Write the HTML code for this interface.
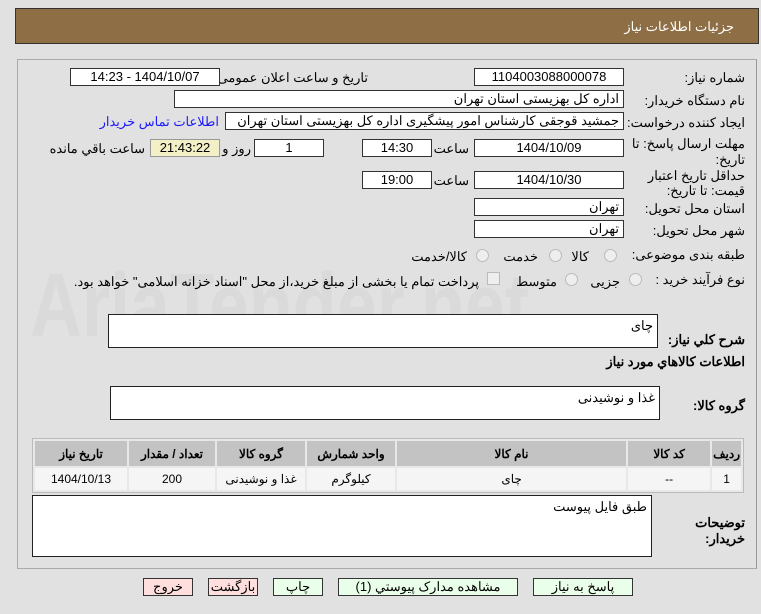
<!DOCTYPE html>
<html><head><meta charset="utf-8"><style>
body{margin:0;width:761px;height:614px;background:#e1e1e1;font-family:Tahoma,"Liberation Sans","Noto Sans CJK SC",sans-serif;font-size:12px;color:#000;position:relative;overflow:hidden}
.a{position:absolute}
.hdr{left:15px;top:8px;width:742px;height:34px;background:#8d6e45;border:1px solid #333}
.hdr span{position:absolute;right:24px;top:10px;color:#fff;font-size:13px}
.panel{left:17px;top:59px;width:738px;height:508px;border:1px solid #aaa;border-right-color:#999}
.lb{position:absolute;direction:rtl;text-align:right;white-space:nowrap;font-size:13px}
.bx{position:absolute;background:#fff;border:1px solid #333;line-height:16px;font-size:13px;direction:rtl;box-sizing:border-box;height:18px}
.c{text-align:center}
.r{padding-right:4px;text-align:right}
.rad{position:absolute;width:11px;height:11px;border-radius:50%;border:1px solid #bbb;background:#eee}
.ta{position:absolute;background:#fff;border:1px solid #222;direction:rtl;text-align:right;font-size:13px;padding:3px 4px;box-sizing:border-box}
table{border-collapse:separate;border-spacing:2px;position:absolute;left:32px;top:438px;width:712px;background:#e8e8e8;border:1px solid #bbb}
th{background:#c3c3c3;height:23px;font-size:12px}
td{background:#f5f5f5;height:20px;text-align:center;font-size:12px}
.btn{position:absolute;top:578px;border:1px solid #333;text-align:center;font-size:13px;line-height:16px;box-sizing:border-box;height:18px}
.g{background:#eaffea}.p{background:#ffdede}
</style></head><body>
<div class="a hdr"><span>جزئیات اطلاعات نیاز</span></div>
<div class="a panel"></div>
<div class="a" style="left:30px;top:255px;font-size:90px;font-weight:bold;color:rgba(190,190,190,.2);white-space:nowrap;transform:scaleX(0.8);transform-origin:left">AriaTender.net</div>

<div class="lb" style="right:16px;top:70px">شماره نیاز:</div>
<div class="bx c" style="left:474px;top:68px;width:150px">1104003088000078</div>
<div class="lb" style="right:393px;top:70px">تاریخ و ساعت اعلان عمومی:</div>
<div class="bx c" style="left:70px;top:68px;width:150px">1404/10/07 - 14:23</div>

<div class="lb" style="right:16px;top:93px">نام دستگاه خریدار:</div>
<div class="bx r" style="left:174px;top:90px;width:450px">اداره کل بهزیستی استان تهران</div>

<div class="lb" style="right:16px;top:115px">ایجاد کننده درخواست:</div>
<div class="bx r" style="left:225px;top:112px;width:399px">جمشید قوجقی کارشناس امور پیشگیری اداره کل بهزیستی استان تهران</div>
<div class="lb" style="right:542px;top:114px;color:#1a1aff">اطلاعات تماس خریدار</div>

<div class="lb" style="right:16px;top:136px;line-height:16px">مهلت ارسال پاسخ: تا<br>تاریخ:</div>
<div class="bx c" style="left:474px;top:139px;width:150px">1404/10/09</div>
<div class="lb" style="right:292px;top:141px">ساعت</div>
<div class="bx c" style="left:362px;top:139px;width:70px">14:30</div>
<div class="bx c" style="left:254px;top:139px;width:70px">1</div>
<div class="lb" style="right:510px;top:141px">روز و</div>
<div class="bx c" style="left:150px;top:139px;width:70px;background:#f3efc6;border-color:#999">21:43:22</div>
<div class="lb" style="right:616px;top:141px">ساعت باقي مانده</div>

<div class="lb" style="right:16px;top:168px;line-height:15px">حداقل تاریخ اعتبار<br>قیمت: تا تاریخ:</div>
<div class="bx c" style="left:474px;top:171px;width:150px">1404/10/30</div>
<div class="lb" style="right:292px;top:173px">ساعت</div>
<div class="bx c" style="left:362px;top:171px;width:70px">19:00</div>

<div class="lb" style="right:16px;top:201px">استان محل تحویل:</div>
<div class="bx r" style="left:474px;top:198px;width:150px">تهران</div>
<div class="lb" style="right:16px;top:223px">شهر محل تحویل:</div>
<div class="bx r" style="left:474px;top:220px;width:150px">تهران</div>

<div class="lb" style="right:16px;top:247px">طبقه بندی موضوعی:</div>
<div class="rad" style="left:604px;top:249px"></div><div class="lb" style="right:172px;top:249px">کالا</div>
<div class="rad" style="left:549px;top:249px"></div><div class="lb" style="right:223px;top:249px">خدمت</div>
<div class="rad" style="left:476px;top:249px"></div><div class="lb" style="right:294px;top:249px">کالا/خدمت</div>

<div class="lb" style="right:16px;top:272px">نوع فرآیند خرید :</div>
<div class="rad" style="left:629px;top:273px"></div><div class="lb" style="right:141px;top:274px">جزیی</div>
<div class="rad" style="left:565px;top:273px"></div><div class="lb" style="right:204px;top:274px">متوسط</div>
<div class="a" style="left:487px;top:272px;width:11px;height:11px;border:1px solid #bbb;background:#eee"></div>
<div class="lb" style="right:282px;top:274px">پرداخت تمام یا بخشی از مبلغ خرید،از محل "اسناد خزانه اسلامی" خواهد بود.</div>

<div class="lb" style="right:16px;top:332px;font-weight:bold">شرح کلي نياز:</div>
<div class="ta" style="left:108px;top:314px;width:550px;height:34px">چای</div>
<div class="lb" style="right:16px;top:354px;font-weight:bold">اطلاعات کالاهاي مورد نياز</div>
<div class="lb" style="right:16px;top:398px;font-weight:bold">گروه کالا:</div>
<div class="ta" style="left:110px;top:386px;width:550px;height:34px">غذا و نوشیدنی</div>

<table dir="rtl">
<tr><th style="width:24px">ردیف</th><th style="width:80px">کد کالا</th><th>نام کالا</th><th style="width:86px">واحد شمارش</th><th style="width:86px">گروه کالا</th><th style="width:84px">تعداد / مقدار</th><th style="width:90px">تاریخ نیاز</th></tr>
<tr><td>1</td><td>--</td><td>چای</td><td>کیلوگرم</td><td>غذا و نوشیدنی</td><td>200</td><td>1404/10/13</td></tr>
</table>

<div class="lb" style="right:16px;top:515px;font-weight:bold;line-height:16px">توضیحات<br>خریدار:</div>
<div class="ta" style="left:32px;top:495px;width:620px;height:62px">طبق فایل پیوست</div>

<div class="btn p" style="left:143px;width:50px">خروج</div>
<div class="btn p" style="left:208px;width:50px">بازگشت</div>
<div class="btn g" style="left:273px;width:50px">چاپ</div>
<div class="btn g" style="left:338px;width:180px">مشاهده مدارک پیوستي (1)</div>
<div class="btn g" style="left:533px;width:100px">پاسخ به نیاز</div>
</body></html>
